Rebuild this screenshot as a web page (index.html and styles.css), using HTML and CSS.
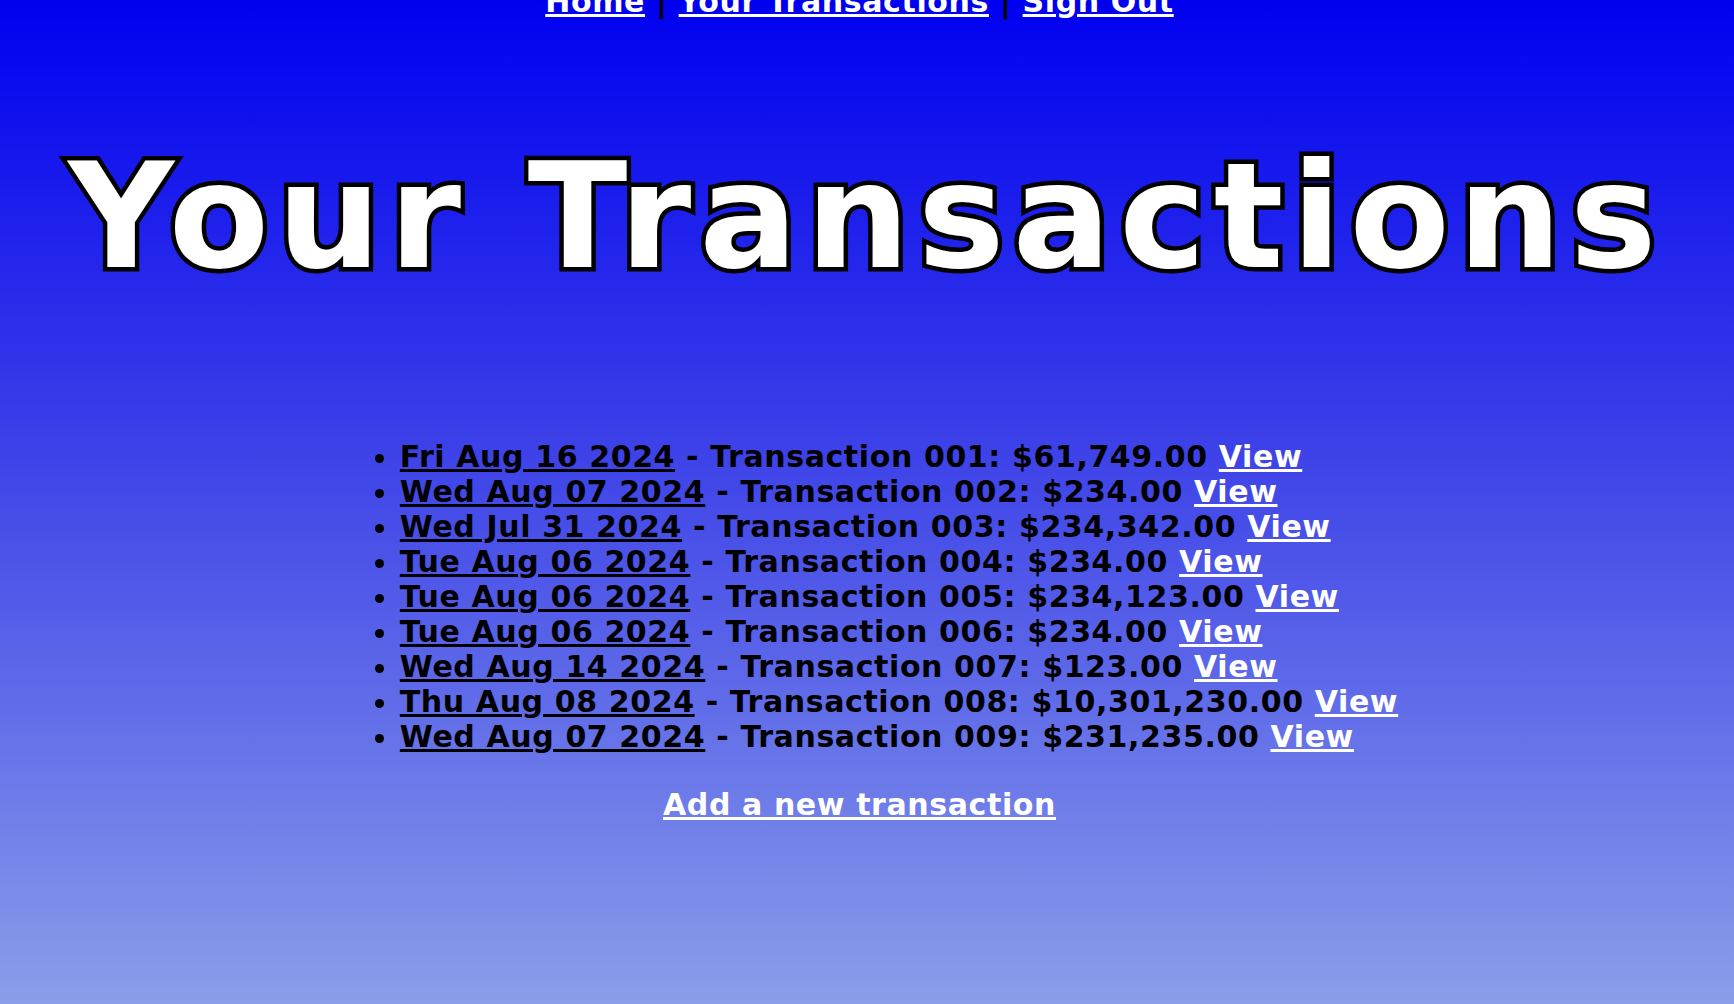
FILE: index.html
```html
<!DOCTYPE html>
<html lang="en">
<head>
<meta charset="utf-8">
<title>Your Transactions</title>
<link rel="stylesheet" href="styles.css">
</head>
<body>
<nav class="nav">
  <a href="#">Home</a> | <a href="#">Your Transactions</a> | <a href="#">Sign Out</a>
</nav>
<h1 class="title">Your Transactions</h1>
<ul class="tx-list">
  <li><a class="date" href="#">Fri Aug 16 2024</a> - Transaction 001: $61,749.00 <a class="view" href="#">View</a></li>
  <li><a class="date" href="#">Wed Aug 07 2024</a> - Transaction 002: $234.00 <a class="view" href="#">View</a></li>
  <li><a class="date" href="#">Wed Jul 31 2024</a> - Transaction 003: $234,342.00 <a class="view" href="#">View</a></li>
  <li><a class="date" href="#">Tue Aug 06 2024</a> - Transaction 004: $234.00 <a class="view" href="#">View</a></li>
  <li><a class="date" href="#">Tue Aug 06 2024</a> - Transaction 005: $234,123.00 <a class="view" href="#">View</a></li>
  <li><a class="date" href="#">Tue Aug 06 2024</a> - Transaction 006: $234.00 <a class="view" href="#">View</a></li>
  <li><a class="date" href="#">Wed Aug 14 2024</a> - Transaction 007: $123.00 <a class="view" href="#">View</a></li>
  <li><a class="date" href="#">Thu Aug 08 2024</a> - Transaction 008: $10,301,230.00 <a class="view" href="#">View</a></li>
  <li><a class="date" href="#">Wed Aug 07 2024</a> - Transaction 009: $231,235.00 <a class="view" href="#">View</a></li>
</ul>
<p class="add"><a href="#">Add a new transaction</a></p>
</body>
</html>
```
FILE: styles.css
```css
html {
  min-height: 100%;
  background: linear-gradient(180deg, #0000f0 0%, #3a3fe8 43%, #8a9ee9 100%);
}
body {
  margin: 0;
  padding-right: 15px;
  min-height: 100vh;
  font-family: "DejaVu Sans", sans-serif;
  font-weight: bold;
  font-size: 30px;
  letter-spacing: 0.6px;
  color: #000;
  overflow: hidden;
}
a {
  color: #fff;
  text-decoration: underline;
}
.nav {
  margin-top: -16px;
  text-align: center;
  line-height: 35px;
}
.title {
  margin: 112px 0 0 0;
  padding-left: 14px;
  font-size: 146px;
  letter-spacing: 8px;
  line-height: normal;
  text-align: center;
  color: #fff;
  -webkit-text-stroke: 9px #000;
  paint-order: stroke fill;
}
.tx-list {
  width: fit-content;
  margin: 138px auto 0 auto;
  padding-left: 79px;
  line-height: 35px;
}
.tx-list .date {
  color: #000;
}
.add {
  margin: 33px 0 0 0;
  text-align: center;
  line-height: 35px;
}
```
